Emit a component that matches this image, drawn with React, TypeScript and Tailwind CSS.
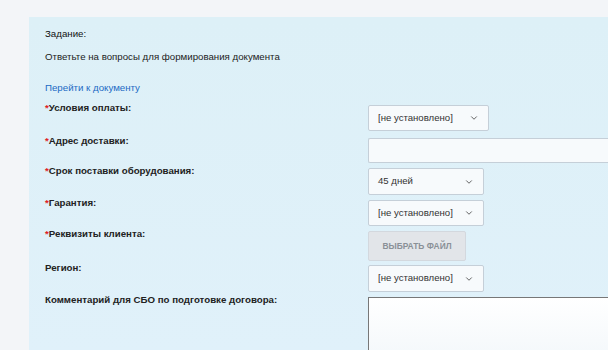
import { ChevronDown } from "lucide-react";

function Select({ value, w, h }: { value: string; w: string; h: string }) {
  return (
    <div
      className={`${w} ${h} flex items-center justify-between pl-[9px] pr-[9px] bg-[#f7fafc] border border-[#c5cfd8] rounded-[2px] text-[9.6px] text-[#333]`}
    >
      <span>{value}</span>
      <ChevronDown className="w-[10px] h-[10px] text-[#555]" strokeWidth={2.2} />
    </div>
  );
}

function Label({ text, req }: { text: string; req?: boolean }) {
  return (
    <div className="text-[9.7px] font-bold text-[#222] leading-[12px] -mt-[3px]">
      {req && <span className="text-[#e02020]">*</span>}
      {text}
    </div>
  );
}

export default function App() {
  const rows = [
    {
      label: "Условия оплаты:",
      req: true,
      ctrl: <Select value="[не установлено]" w="w-[121px]" h="h-[26px]" />,
      mb: "mb-[7px]",
    },
    {
      label: "Адрес доставки:",
      req: true,
      ctrl: (
        <div className="h-[25px] w-full bg-[#f7fafc] border border-[#c5cfd8] border-r-0 rounded-l-[2px]" />
      ),
      mb: "mb-[5px]",
    },
    {
      label: "Срок поставки оборудования:",
      req: true,
      ctrl: <Select value="45 дней" w="w-[116px]" h="h-[27px]" />,
      mb: "mb-[5px]",
    },
    {
      label: "Гарантия:",
      req: true,
      ctrl: <Select value="[не установлено]" w="w-[116px]" h="h-[26px]" />,
      mb: "mb-[5px]",
    },
    {
      label: "Реквизиты клиента:",
      req: true,
      ctrl: (
        <div className="w-[98px] h-[30px] flex items-center justify-center bg-[#e2e5e9] border border-[#d3d8de] rounded-[2px] text-[8.4px] font-bold text-[#8a9097]">
          ВЫБРАТЬ ФАЙЛ
        </div>
      ),
      mb: "mb-[4px]",
    },
    {
      label: "Регион:",
      ctrl: <Select value="[не установлено]" w="w-[116px]" h="h-[27px]" />,
      mb: "mb-[5px]",
    },
  ];

  return (
    <div
      className="w-[608px] h-[350px] overflow-hidden bg-[#f3f5f8] pt-[17px] pl-[29px]"
      style={{ fontFamily: '"Liberation Sans", Arial, sans-serif' }}
    >
      <div className="h-[333px] bg-gradient-to-b from-[#ddf0f7] to-[#e0f1fa] pl-[16px] pt-[11px]">
        <div className="text-[9.7px] text-[#111] leading-[12px]">Задание:</div>
        <div className="text-[9.7px] text-[#222] leading-[12px] mt-[11px]">
          Ответьте на вопросы для формирования документа
        </div>
        <div className="text-[9.7px] text-[#1b6ac4] leading-[12px] mt-[19px]">
          Перейти к документу
        </div>
        <div className="mt-[11px]">
          {rows.map((r, i) => (
            <div key={i} className={`flex items-start ${r.mb}`}>
              <div className="w-[323px] shrink-0">
                <Label text={r.label} req={r.req} />
              </div>
              <div className="flex-1">{r.ctrl}</div>
            </div>
          ))}
          <div className="flex items-start">
            <div className="w-[323px] shrink-0">
              <Label text="Комментарий для СБО по подготовке договора:" />
            </div>
            <div className="flex-1 h-[60px] bg-gradient-to-b from-[#ffffff] to-[#f4f8fb] border border-[#777] border-r-0" />
          </div>
        </div>
      </div>
    </div>
  );
}
